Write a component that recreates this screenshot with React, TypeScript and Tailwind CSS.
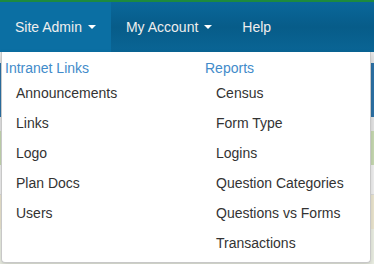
import React from 'react'

const intranet = ['Announcements', 'Links', 'Logo', 'Plan Docs', 'Users']
const reports = ['Census', 'Form Type', 'Logins', 'Question Categories', 'Questions vs Forms', 'Transactions']

function Caret() {
  return <span className="ml-[6px] inline-block h-0 w-0 border-x-[4px] border-t-[4px] border-x-transparent border-t-white align-middle" />
}

function Column({ title, items, className }: { title: string; items: string[]; className?: string }) {
  return (
    <div className={className}>
      <div className="pl-[3px] text-[14px] leading-5 text-[#428bca]">{title}</div>
      {items.map((item) => (
        <div key={item} className="pl-[14px] py-[5px] text-[14px] leading-5 text-[#333]">
          {item}
        </div>
      ))}
    </div>
  )
}

export default function App() {
  return (
    <div className="relative h-[264px] w-[374px] overflow-hidden bg-white font-['Liberation_Sans',Arial,sans-serif]">
      <nav className="flex h-[52px] whitespace-nowrap border-t-2 border-[#1d8a3f] bg-gradient-to-b from-[#0a679a] via-[#075c89] to-[#0a6595] text-[14px] text-[#eee]">
        <div className="flex items-center bg-[#0b6fa3] px-[15px]">
          Site Admin
          <Caret />
        </div>
        <div className="flex items-center px-[15px]">
          My Account
          <Caret />
        </div>
        <div className="flex items-center px-[15px]">Help</div>
      </nav>

      {/* page content underneath */}
      <div className="flex flex-col">
        <div className="h-[11px] bg-[#e6e6e6]" />
        <div className="h-[54px] bg-[#2d73a8]" />
        <div className="h-[14px] bg-[#e8e8e8]" />
        <div className="h-[34px] bg-[#c9dcb3]" />
        <div className="h-[30px] border-b border-[#ddd] bg-[#f3f3f3]" />
        <div className="h-[34px] bg-[#efe9d2]" />
        <div className="h-[40px] bg-[#eef2e6]" />
      </div>

      <div className="absolute left-[1px] top-[52px] flex w-[370px] rounded-b-[4px] border border-t-0 border-[#c8c8c8] bg-white pt-[6px] pb-[4px] shadow-[0_3px_6px_rgba(0,0,0,0.18)]">
        <Column title="Intranet Links" items={intranet} className="w-[200px]" />
        <Column title="Reports" items={reports} className="flex-1" />
      </div>
    </div>
  )
}
